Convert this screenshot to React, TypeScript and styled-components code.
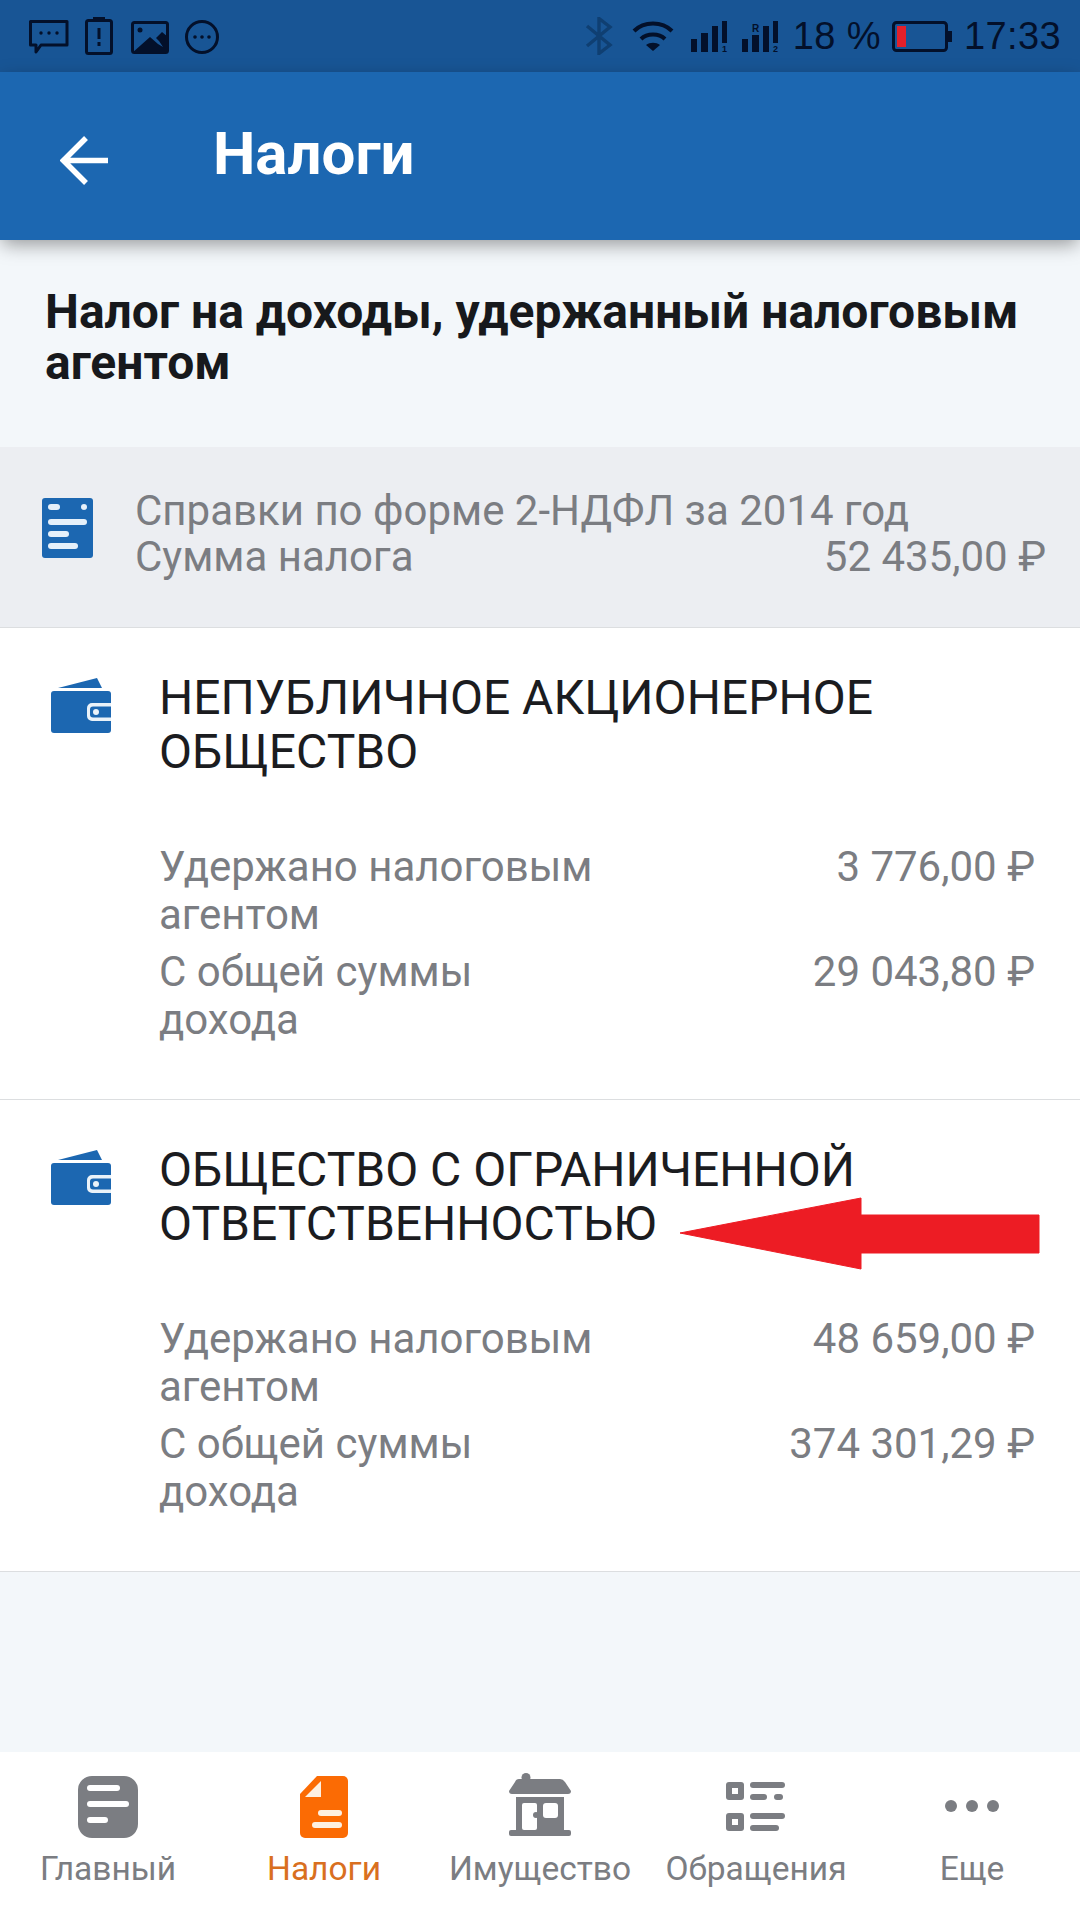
import React from "react";
import styled, { createGlobalStyle } from "styled-components";

const Global = createGlobalStyle`
  html, body { margin: 0; padding: 0; background: #f3f7fa; }
  body { font-family: Roboto, "Noto Sans", sans-serif; }
`;

const Page = styled.div`
  position: relative;
`;

const Screen = styled.div`
  width: 1080px;
  height: 1920px;
  display: flex;
  flex-direction: column;
  background: #f3f7fa;
  overflow: hidden;
`;

const StatusBar = styled.div`
  height: 72px;
  flex: none;
  background: #185595;
  display: flex;
  align-items: center;
  justify-content: space-between;
  padding: 0 19px 0 28px;
  color: #03102a;
`;
const StatusGroup = styled.div`
  display: flex;
  align-items: center;
`;
const StatusText = styled.span`
  font-family: "Liberation Sans", sans-serif;
  font-size: 38px;
  line-height: 72px;
  color: #03102a;
  letter-spacing: 0.4px;
`;

const AppBar = styled.header`
  height: 168px;
  flex: none;
  background: #1c67b1;
  display: flex;
  align-items: center;
  padding-left: 60px;
  box-shadow: 0 6px 18px -2px rgba(0, 0, 0, 0.4);
  position: relative;
  z-index: 1;
`;
const BackIcon = styled.svg`
  display: block;
  margin-top: 9px;
`;
const AppTitle = styled.h1`
  margin: 0 0 5px 105px;
  color: #fff;
  font-size: 60px;
  font-weight: 700;
  line-height: 64px;
`;

const Heading = styled.h2`
  margin: 0;
  height: 207px;
  box-sizing: border-box;
  padding: 46px 30px 0 45px;
  font-size: 48px;
  line-height: 51px;
  font-weight: 700;
  color: #17191c;
`;

const Summary = styled.section`
  height: 181px;
  box-sizing: border-box;
  background: #eceef2;
  border-bottom: 1px solid #dcdee0;
  display: flex;
  padding: 41px 34px 0 42px;
`;
const SummaryIcon = styled.svg`
  display: block;
  flex: none;
  margin-top: 10px;
`;
const SummaryBody = styled.div`
  flex: 1;
  margin-left: 42px;
  font-size: 42px;
  line-height: 46px;
  color: #7b7d82;
`;
const SummaryRow = styled.div`
  display: flex;
  justify-content: space-between;
`;

const Entry = styled.section`
  height: 472px;
  box-sizing: border-box;
  flex: none;
  background: #fff;
  border-bottom: 1px solid #dcdee0;
  display: flex;
  padding: 43px 0 0 51px;
`;
const WalletIcon = styled.svg`
  display: block;
  flex: none;
  margin-top: 7px;
`;
const EntryBody = styled.div`
  flex: 1;
  margin-left: 48px;
  padding-right: 45px;
`;
const Company = styled.div`
  font-size: 48px;
  line-height: 54px;
  color: #1b1c1f;
  margin-bottom: 64px;
  white-space: nowrap;
`;
const Metric = styled.div`
  display: flex;
  justify-content: space-between;
  align-items: flex-start;
  font-size: 42px;
  line-height: 48px;
  color: #7b7d82;
  margin-bottom: 9px;
`;
const MetricLabel = styled.div`
  width: 440px;
`;

const Spacer = styled.div`
  flex: 1;
`;

const Arrow = styled.svg`
  position: absolute;
  left: 678px;
  top: 1196px;
  z-index: 2;
`;

const TabBar = styled.nav`
  height: 168px;
  flex: none;
  background: #fff;
  display: flex;
`;
const Tab = styled.div<{ $active?: boolean }>`
  width: 216px;
  flex: none;
  display: flex;
  flex-direction: column;
  align-items: center;
  padding-top: 24px;
  box-sizing: border-box;
  color: ${(p) => (p.$active ? "#d96f20" : "#7b7d82")};
`;
const TabIcon = styled.div`
  height: 62px;
  display: flex;
  align-items: flex-start;
`;
const TabLabel = styled.span`
  margin-top: 12px;
  font-size: 33.5px;
  line-height: 38px;
  white-space: nowrap;
`;

const Glyph = styled.svg<{ $r?: number; $t?: number; $l?: number }>`
  display: block;
  margin-left: ${(p) => p.$l ?? 0}px;
  margin-right: ${(p) => p.$r ?? 0}px;
  margin-top: ${(p) => p.$t ?? 0}px;
`;

const Ruble = "₽";

const Wallet = () => (
  <WalletIcon width="60" height="55" viewBox="0 0 60 55">
    <path d="M7 10 L46 0 L51 10 Z" fill="#1c67b1" />
    <rect x="0" y="13" width="60" height="42" rx="3" fill="#1c67b1" />
    <path d="M60 25 H41 a5 5 0 0 0 -5 5 V38 a5 5 0 0 0 5 5 H60 V39.5 H42 a3 3 0 0 1 -3 -3 V31.5 a3 3 0 0 1 3 -3 H60 Z" fill="#eaf2f9" />
    <circle cx="45" cy="34" r="3" fill="#eaf2f9" />
  </WalletIcon>
);

const DocIcon = () => (
  <SummaryIcon width="51" height="60" viewBox="0 0 51 60">
    <rect x="0" y="0" width="51" height="60" rx="3" fill="#1c67b1" />
    <rect x="6" y="6" width="12" height="6" rx="3" fill="#e5f0fa" />
    <circle cx="42" cy="9" r="3" fill="#e5f0fa" />
    <rect x="6" y="21" width="39" height="6" rx="3" fill="#e5f0fa" />
    <rect x="6" y="33" width="21" height="6" rx="3" fill="#e5f0fa" />
    <rect x="6" y="45" width="30" height="6" rx="3" fill="#e5f0fa" />
  </SummaryIcon>
);

const I = "#03102a";

const StatusLeft = () => (
  <Glyph width="192" height="40" viewBox="0 0 192 40">
    <path d="M2.5 5.5 H39 V29 H13 L8 36 V29 H2.5 Z" fill="none" stroke={I} strokeWidth="3" strokeLinejoin="round" />
    <circle cx="13" cy="17" r="1.7" fill={I} /><circle cx="21" cy="17" r="1.7" fill={I} /><circle cx="29" cy="17" r="1.7" fill={I} />
    <rect x="58.5" y="4.5" width="25" height="33" rx="2" fill="none" stroke={I} strokeWidth="3" />
    <rect x="65" y="1" width="12" height="4" fill={I} />
    <rect x="69.5" y="12" width="3" height="11" fill={I} /><rect x="69.5" y="26" width="3" height="4" fill={I} />
    <rect x="104.5" y="6.5" width="35" height="30" rx="2" fill="none" stroke={I} strokeWidth="3" />
    <path d="M104 37 L122 21 L130 28 L135 31 L131 25 L128 22 L134 16 L140 21 V37 Z" fill={I} />
    <circle cx="112" cy="14" r="2.5" fill={I} />
    <circle cx="174" cy="21" r="15.5" fill="none" stroke={I} strokeWidth="3" />
    <circle cx="167" cy="21" r="1.8" fill={I} /><circle cx="174" cy="21" r="1.8" fill={I} /><circle cx="181" cy="21" r="1.8" fill={I} />
  </Glyph>
);

const Bluetooth = () => (
  <Glyph width="28" height="38" viewBox="0 0 28 38" $r={19}>
    <path d="M2 9 L25 28 L14 36.5 V1.5 L25 10 L2 29" fill="none" stroke="#0f3f72" strokeWidth="3.4" />
  </Glyph>
);

const Wifi = () => (
  <Glyph width="42" height="32" viewBox="0 0 42 32" $r={17}>
    <path d="M2 11 C12 1 30 1 40 11" fill="none" stroke={I} strokeWidth="4" />
    <path d="M9 19 C15 13 27 13 33 19" fill="none" stroke={I} strokeWidth="4" />
    <path d="M14 25 L21 31 L28 25 C24 22 18 22 14 25 Z" fill={I} />
  </Glyph>
);

const Signal = ({ sub, top }: { sub: string; top?: string }) => (
  <Glyph width="42" height="37" viewBox="0 0 42 37" $r={9} $t={6}>
    <rect x="0" y="18" width="6" height="13" fill={I} />
    <rect x="10" y={top ? 14 : 12} width="7" height={top ? 17 : 19} fill={I} />
    <rect x="21" y="5" width="6" height="26" fill={I} />
    <rect x="31" y="0" width="5" height="22" fill={I} />
    <text x="31" y="31" fontSize="9" fontWeight="700" fontFamily="Liberation Sans, sans-serif" fill={I}>{sub}</text>
    {top ? <text x="10" y="11" fontSize="10" fontWeight="700" fontFamily="Liberation Sans, sans-serif" fill={I}>{top}</text> : null}
  </Glyph>
);

const Battery = () => (
  <Glyph width="60" height="31" viewBox="0 0 60 31" $l={11} $r={12}>
    <rect x="1.5" y="1.5" width="53" height="28" rx="3" fill="none" stroke={I} strokeWidth="3" />
    <rect x="56" y="10" width="4" height="11" fill={I} />
    <rect x="5" y="5" width="9" height="21" fill="#e3202a" />
  </Glyph>
);

const Gray = "#7b7d82";
const HomeTab = () => (
  <Glyph width="60" height="62" viewBox="0 0 60 62">
    <rect x="0" y="0" width="60" height="62" rx="14" fill={Gray} />
    <rect x="9" y="9" width="33" height="6" rx="3" fill="#fff" />
    <rect x="9" y="25" width="42" height="6" rx="3" fill="#fff" />
    <rect x="9" y="41" width="21" height="6" rx="3" fill="#fff" />
  </Glyph>
);
const TaxTab = () => (
  <Glyph width="48" height="62" viewBox="0 0 48 62">
    <path d="M17 0 H43 a5 5 0 0 1 5 5 V57 a5 5 0 0 1 -5 5 H5 a5 5 0 0 1 -5 -5 V18 Z" fill="#fb6b04" />
    <path d="M21 5 V21 H5 Z" fill="#fdf0e2" />
    <rect x="18" y="34" width="24" height="6" rx="3" fill="#fdf0e2" />
    <rect x="12" y="46" width="30" height="6" rx="3" fill="#fdf0e2" />
  </Glyph>
);
const HouseTab = () => (
  <Glyph width="62" height="63" viewBox="0 0 62 63" $t={-3}>
    <circle cx="17" cy="4.5" r="4.5" fill={Gray} />
    <path d="M10 6 H51 Q54 6 56 9 L62 18 Q62 21 59 21 H3 Q0 21 0 18 L6 9 Q7 6 10 6 Z" fill={Gray} />
    <rect x="7" y="24" width="48" height="34" fill={Gray} />
    <rect x="0" y="57" width="62" height="6" rx="2" fill={Gray} />
    <rect x="13" y="30" width="15" height="27" rx="2" fill="#fff" />
    <rect x="34" y="30" width="15" height="15" rx="3" fill="#fff" />
    <circle cx="27" cy="42" r="3" fill={Gray} />
  </Glyph>
);
const ListTab = () => (
  <Glyph width="60" height="50" viewBox="0 0 60 50" $t={6}>
    <rect x="0" y="0" width="18" height="18" rx="3" fill={Gray} />
    <rect x="6" y="6" width="6" height="6" fill="#fff" />
    <rect x="0" y="31" width="18" height="18" rx="3" fill={Gray} />
    <rect x="6" y="37" width="6" height="6" fill="#fff" />
    <rect x="24" y="0" width="35" height="6" rx="3" fill={Gray} />
    <rect x="24" y="12" width="17" height="6" rx="3" fill={Gray} />
    <rect x="48" y="12" width="9" height="6" rx="3" fill={Gray} />
    <rect x="24" y="31" width="35" height="6" rx="3" fill={Gray} />
    <rect x="24" y="43" width="29" height="6" rx="3" fill={Gray} />
  </Glyph>
);
const MoreTab = () => (
  <Glyph width="54" height="14" viewBox="0 0 54 14" $t={23}>
    <circle cx="6" cy="7" r="6" fill={Gray} />
    <circle cx="27" cy="7" r="6" fill={Gray} />
    <circle cx="48" cy="7" r="6" fill={Gray} />
  </Glyph>
);

const entries = [
  { name: ["НЕПУБЛИЧНОЕ АКЦИОНЕРНОЕ", "ОБЩЕСТВО"], withheld: "3 776,00", income: "29 043,80" },
  { name: ["ОБЩЕСТВО С ОГРАНИЧЕННОЙ", "ОТВЕТСТВЕННОСТЬЮ"], withheld: "48 659,00", income: "374 301,29" },
];

const tabs = [
  { label: "Главный", icon: <HomeTab /> },
  { label: "Налоги", icon: <TaxTab />, active: true },
  { label: "Имущество", icon: <HouseTab /> },
  { label: "Обращения", icon: <ListTab /> },
  { label: "Еще", icon: <MoreTab /> },
];

export default function App() {
  return (
    <Page>
      <Global />
      <Screen>
        <StatusBar>
          <StatusGroup><StatusLeft /></StatusGroup>
          <StatusGroup>
            <Bluetooth />
            <Wifi />
            <Signal sub="1" />
            <Signal sub="2" top="R" />
            <StatusText>18 %</StatusText>
            <Battery />
            <StatusText>17:33</StatusText>
          </StatusGroup>
        </StatusBar>
        <AppBar>
          <BackIcon width="48" height="49" viewBox="0 0 48 49">
            <path d="M48 24.5 H4 M26 2 L3.5 24.5 L26 47" fill="none" stroke="#fff" strokeWidth="5.5" />
          </BackIcon>
          <AppTitle>Налоги</AppTitle>
        </AppBar>
        <Heading>Налог на доходы, удержанный налоговым агентом</Heading>
        <Summary>
          <DocIcon />
          <SummaryBody>
            <div>Справки по форме 2-НДФЛ за 2014 год</div>
            <SummaryRow><span>Сумма налога</span><span>52 435,00 {Ruble}</span></SummaryRow>
          </SummaryBody>
        </Summary>
        {entries.map((e) => (
          <Entry key={e.withheld}>
            <Wallet />
            <EntryBody>
              <Company>{e.name[0]}<br />{e.name[1]}</Company>
              <Metric><MetricLabel>Удержано налоговым агентом</MetricLabel><span>{e.withheld} {Ruble}</span></Metric>
              <Metric><MetricLabel>С общей суммы дохода</MetricLabel><span>{e.income} {Ruble}</span></Metric>
            </EntryBody>
          </Entry>
        ))}
        <Spacer />
        <TabBar>
          {tabs.map((t) => (
            <Tab key={t.label} $active={t.active}>
              <TabIcon>{t.icon}</TabIcon>
              <TabLabel>{t.label}</TabLabel>
            </Tab>
          ))}
        </TabBar>
      </Screen>
      <Arrow width="362" height="74" viewBox="0 0 362 74">
        <path d="M2 37 L183 2 V19 H361 V57 H183 V73 Z" fill="#ed1c24" stroke="#ed1c24" strokeWidth="1" strokeLinejoin="round" />
      </Arrow>
    </Page>
  );
}
